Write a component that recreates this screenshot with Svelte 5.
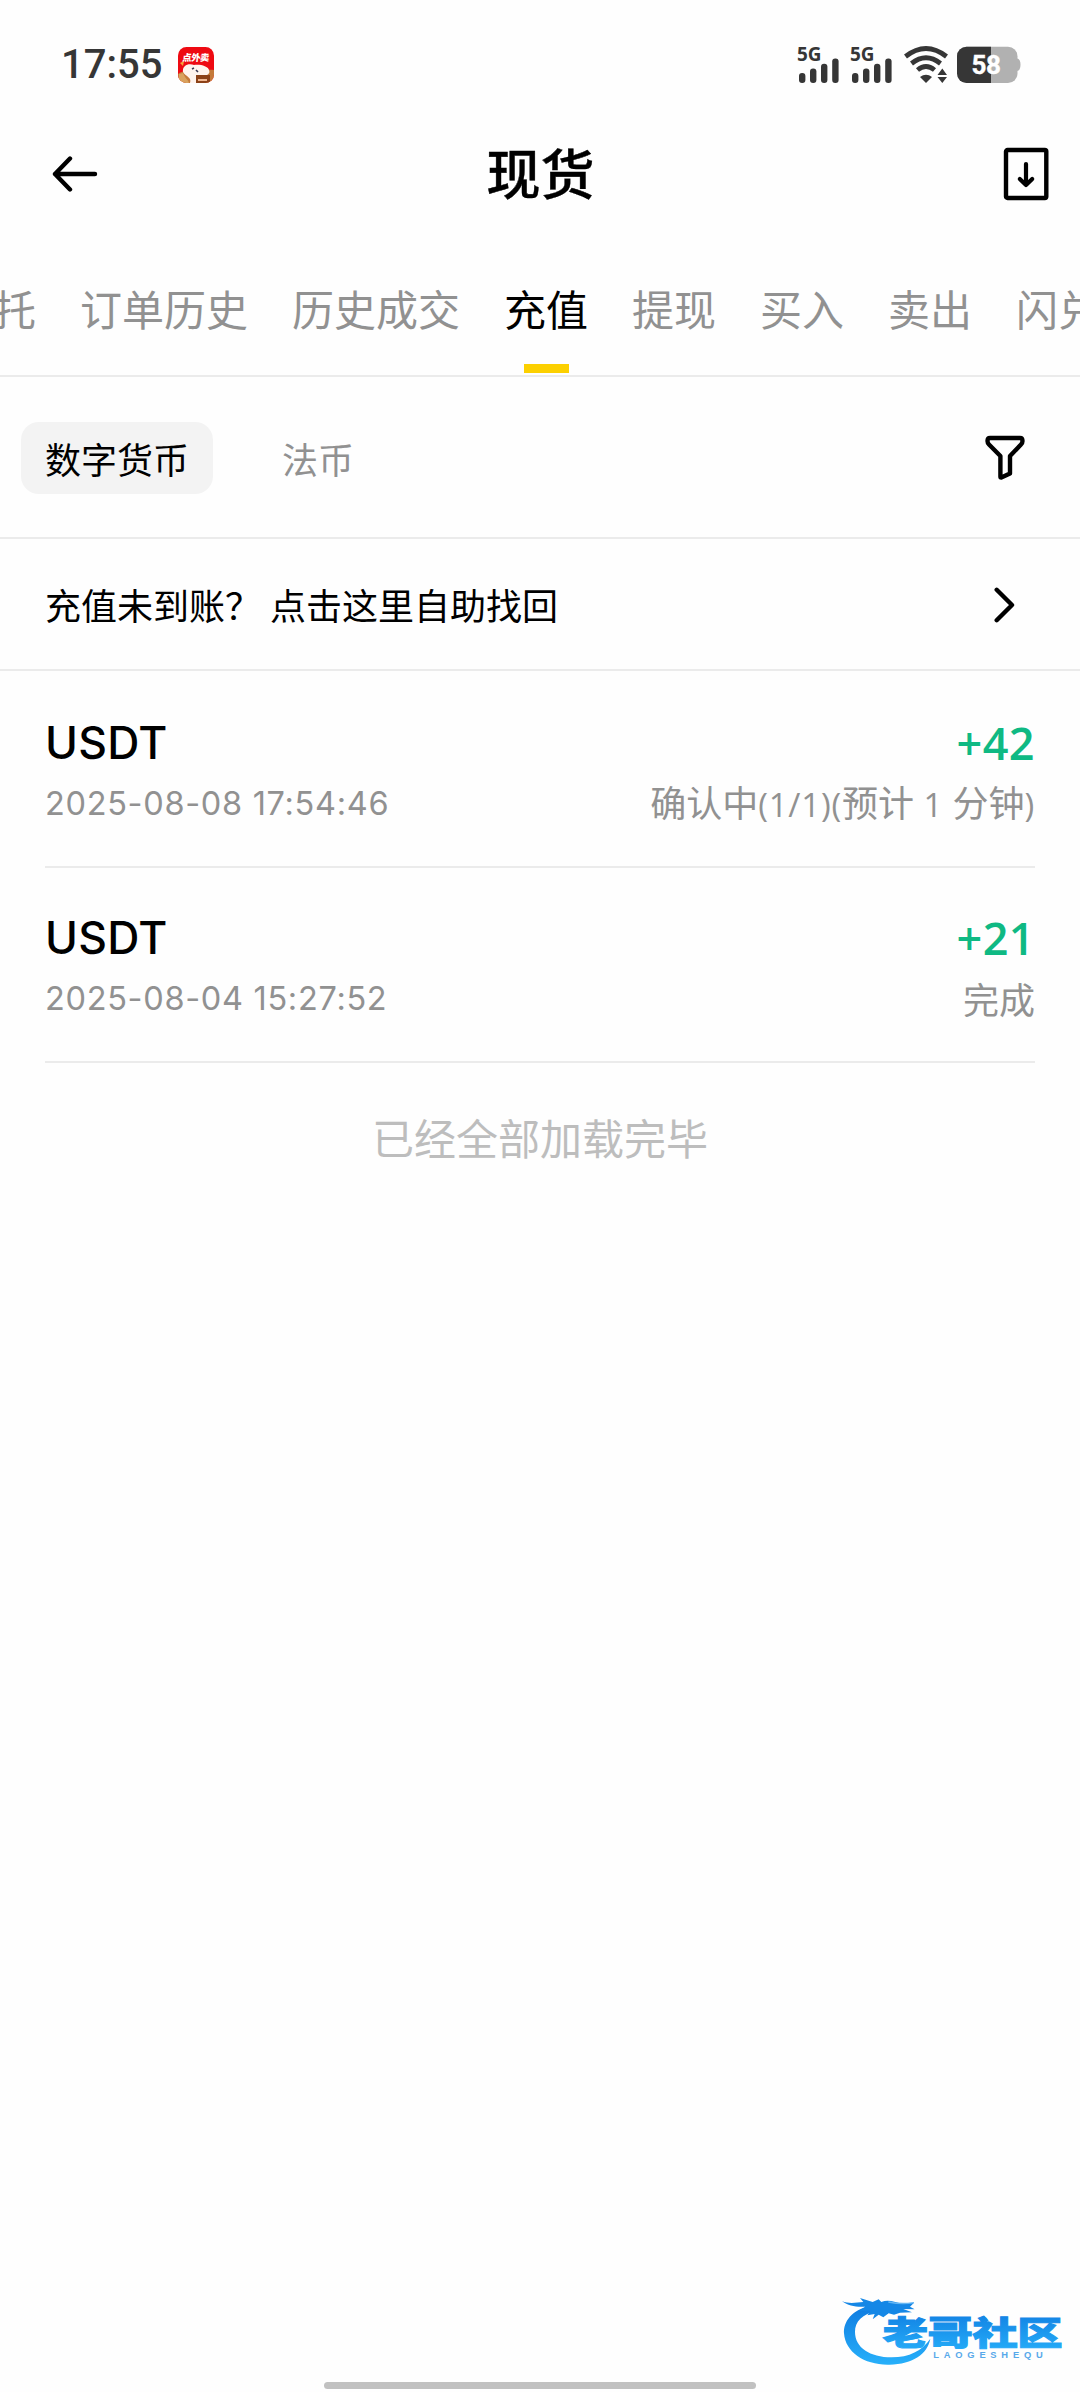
<script>
  const tabs = ['当前委托', '订单历史', '历史成交', '充值', '提现', '买入', '卖出', '闪兑'];
  const active = '充值';
  const records = [
    { coin: 'USDT', time: '2025-08-08 17:54:46', amount: '+42', status: '确认中(1/1)(预计 1 分钟)' },
    { coin: 'USDT', time: '2025-08-04 15:27:52', amount: '+21', status: '完成' }
  ];
  // Latin runs are set slightly smaller than the Chinese characters around them.
  const runs = (text) => text.match(/[\x20-\x7e]+|[^\x20-\x7e]+/g) ?? [];
  const isLatin = (run) => /^[\x20-\x7e]/.test(run);
</script>

{#snippet signal()}
  <svg class="signal" width="42" height="38" viewBox="0 0 42 38">
    <text x="-1" y="15.3" textLength="24.5" lengthAdjust="spacingAndGlyphs">5G</text>
    <rect x="1" y="27" width="6.4" height="10" rx="3" />
    <rect x="12" y="22.4" width="6.4" height="14.6" rx="3" />
    <rect x="23" y="17.8" width="6.4" height="19.2" rx="3" />
    <rect x="34.2" y="12.6" width="6.4" height="24.4" rx="3" />
  </svg>
{/snippet}

<div class="screen">
  <div class="status">
    <span class="clock">17:55</span>
    <svg class="app" width="36" height="36" viewBox="0 0 36 36">
      <defs><clipPath id="tile"><rect width="36" height="36" rx="8.5" /></clipPath></defs>
      <g clip-path="url(#tile)">
        <rect width="36" height="36" fill="#ee0a12" />
        <path d="M0 27C5 22 30 22 36 23V36H0Z" fill="#c47a3a" />
        <path d="M5 25C4 18 11 16 16 18C22 17 30 19 31 23C33 28 27 29 22 29L21 36H12C14 30 8 30 5 25Z" fill="#fff4ee" />
        <path d="M2 16L6 14L5 19Z" fill="#f6a33c" />
        <path d="M5 26C8 33 10 32 11 36H1V27Z" fill="#d9a25e" />
        <rect x="18" y="28" width="14" height="8" fill="#8c4218" />
        <path d="M14 22L16 21M18 23L20 25" stroke="#3b3850" stroke-width="1.6" />
        <path d="M20 33H29" stroke="#f0b791" stroke-width="2" />
        <text x="4.5" y="13.6" font-size="9.3" font-weight="900" fill="#fff" textLength="27" transform="skewX(-6) translate(1 0)">点外卖</text>
      </g>
    </svg>
    <span class="grow"></span>
    {@render signal()}
    {@render signal()}
    <svg class="wifi" width="45" height="38" viewBox="0 0 45 38">
      <g fill="none" stroke="#363636" stroke-width="4.8">
        <path d="M1.5 10.5Q22 -5.5 42.5 10.5" />
        <path d="M7.5 17.5Q22 6 36.5 17.5" />
        <path d="M13.5 24Q22 17 30.5 24" />
      </g>
      <path d="M16 31Q22 26.500 28 31L22 37Z" fill="#363636" />
      <path d="M33.500 29L38.300 22.500L43 29ZM33.500 31L38.300 37L43 31Z" fill="#363636" />
    </svg>
    <svg class="battery" width="64" height="38" viewBox="0 0 64 38">
      <defs><clipPath id="cell"><rect y="0.7" width="60.5" height="36.300" rx="9.500" /></clipPath></defs>
      <path d="M60 12.500Q63.500 13 63.500 18.800T60 25Z" fill="#b1b1b1" />
      <g clip-path="url(#cell)">
        <rect width="61" height="38" fill="#b1b1b1" />
        <rect width="34" height="38" fill="#363636" />
      </g>
      <text x="14.5" y="28" textLength="29.5">58</text>
    </svg>
  </div>

  <header>
    <svg width="46" height="36" viewBox="0 0 46 36">
      <path d="M18 2.500L3 18L18 33.500M3 18H43" fill="none" stroke="#000" stroke-width="4.400" stroke-linecap="round" stroke-linejoin="round" />
    </svg>
    <h1>现货</h1>
    <svg width="46" height="54" viewBox="0 0 46 54">
      <rect x="3" y="3" width="40.300" height="48" rx="1.500" fill="none" stroke="#000" stroke-width="4.400" />
      <path d="M23 17V38M16.800 32L23 38L29.200 32" fill="none" stroke="#000" stroke-width="4.200" stroke-linecap="round" stroke-linejoin="round" />
    </svg>
  </header>

  <nav>
    {#each tabs as tab}
      <span class="tab" class:active={tab === active}>{tab}</span>
    {/each}
  </nav>

  <div class="filters">
    <span class="chip on">数字货币</span>
    <span class="chip">法币</span>
    <span class="grow"></span>
    <svg width="40" height="46" viewBox="0 0 40 46">
      <path d="M5 3H35Q37.500 3 37.500 6Q37.500 8 36 9.500L25 21V38.500L16.300 42.500Q15.400 42.500 15.400 41.500V21L4 9.500Q2.500 8 2.500 6Q2.500 3 5 3Z" fill="none" stroke="#000" stroke-width="4.400" stroke-linejoin="round" />
    </svg>
  </div>

  <div class="help">
    <span class="help-text">充值未到账？<span class="gap">&nbsp;</span>点击这里自助找回</span>
    <svg width="22" height="36" viewBox="0 0 22 36">
      <path d="M2.700 2.800L18 18L2.700 33.200" fill="none" stroke="#000" stroke-width="4.400" stroke-linecap="round" stroke-linejoin="round" />
    </svg>
  </div>

  <main>
    {#each records as record}
      <section class="record">
        <div class="line main-line">
          <span class="coin">{record.coin}</span>
          <span class="amount">{record.amount}</span>
        </div>
        <div class="line sub-line">
          <span class="time">{record.time}</span>
          <span class="state">{#each runs(record.status) as run}<span class:latin={isLatin(run)}>{run}</span>{/each}</span>
        </div>
      </section>
    {/each}
    <p class="end">已经全部加载完毕</p>
  </main>

  <footer>
    <svg class="brand" width="260" height="96" viewBox="0 0 780 288">
      <defs>
        <linearGradient id="blue" x1="0" y1="0" x2="0" y2="1">
          <stop offset="0" stop-color="#0f7be0" />
          <stop offset="1" stop-color="#27b0fa" />
        </linearGradient>
      </defs>
      <path d="M150 78C95 90 70 125 72 160C76 218 135 256 208 254C280 252 322 222 331 176C306 212 268 232 215 232C150 232 105 203 105 156C105 124 126 102 172 92Z" fill="url(#blue)" />
      <path d="M66 64C88 72 108 68 130 66L120 54L158 66L176 58L184 66C205 58 225 66 240 70L282 68L270 80L284 88L250 87L276 97L240 98L222 104L206 100L190 112L176 104L158 118L164 102L142 106L152 92L118 92L136 80C110 82 85 78 66 64Z" fill="#1587e6" />
      <path d="M205 66C235 72 258 72 282 68" fill="none" stroke="#64b6f4" stroke-width="4" />
      <g fill="url(#blue)" stroke="url(#blue)" stroke-width="3">
        <text class="name" transform="translate(188 196) scale(1.360 1)" font-size="100" textLength="397">老哥社区</text>
      </g>
      <text class="latin-name" x="340" y="234" textLength="328">LAOGESHEQU</text>
    </svg>
    <div class="home"></div>
  </footer>
</div>

<style>
  :global(body) { background: #fefefe; }
  .screen {
    width: 1080px;
    height: 2392px;
    display: flex;
    flex-direction: column;
    overflow: hidden;
    color: #000;
    background: #fefefe;
    font-family: 'Noto Sans CJK SC', sans-serif;
    font-size: 36px;
  }
  svg { display: block; flex: none; }
  .grow { flex: 1; }
  .status {
    height: 128px;
    box-sizing: border-box;
    padding: 2px 59px 0 61px;
    display: flex;
    align-items: center;
  }
  .clock {
    font: 500 40px/40px Roboto, sans-serif;
    color: #363636;
  }
  .app { margin-left: 16px; }
  .signal { margin-right: 11px; fill: #363636; overflow: visible; }
  .signal text { font: 700 19px 'Noto Sans', sans-serif; }
  .wifi { margin-right: 8px; }
  .battery text { font: 700 26px Roboto, sans-serif; fill: #fff; stroke: #fff; stroke-width: 0.4px; }
  header {
    height: 92px;
    padding: 0 31px 0 52px;
    display: flex;
    align-items: center;
    justify-content: space-between;
  }
  h1 {
    margin: -5px 0 0 -20px;
    font-size: 54px;
    line-height: 87px;
    font-weight: 500;
    -webkit-text-stroke: 0.4px #000;
  }
  nav {
    height: 155px;
    border-bottom: 2px solid #ebebeb;
    display: flex;
    gap: 44px;
    margin-left: -132px;
    font-size: 42px;
    line-height: 175px;
    color: #919191;
  }
  .tab { flex: none; white-space: nowrap; }
  .active {
    display: flex;
    flex-direction: column;
    align-items: center;
    color: #000;
  }
  .active::after {
    content: '';
    flex: none;
    width: 45px;
    height: 9px;
    margin-top: -31px;
    background: #fcd000;
  }
  .filters {
    height: 158px;
    padding: 2px 55px 0 21px;
    border-bottom: 2px solid #ebebeb;
    display: flex;
    align-items: center;
    gap: 45px;
  }
  .chip { padding: 0 24px; height: 72px; line-height: 73px; border-radius: 18px; color: #919191; }
  .chip.on { background: #f3f3f3; color: #000; }
  .help {
    height: 129px;
    padding: 1px 64px 0 45px;
    border-bottom: 2px solid #ebebeb;
    display: flex;
    align-items: center;
    justify-content: space-between;
  }
  .help-text { margin-bottom: 2px; }
  .gap { letter-spacing: 1px; }
  main { padding: 2px 45px 0; flex: 1; }
  .record {
    height: 195px;
    box-sizing: border-box;
    padding-top: 39px;
    border-bottom: 2px solid #ebebeb;
  }
  .line { display: flex; justify-content: space-between; align-items: center; }
  .main-line { height: 60px; font: 600 45px/59px 'Open Sans', sans-serif; }
  .coin { margin-top: 3px; font-family: Inter, sans-serif; font-size: 44.5px; font-weight: 500; letter-spacing: 0.3px; }
  .amount { color: #0fb983; letter-spacing: 0.4px; }
  .sub-line { height: 62px; color: #919191; line-height: 62px; }
  .time {
    margin-top: 2px;
    font: 32.5px/62px Inter, sans-serif;
    letter-spacing: 0.68px;
  }
  .state { white-space: pre; }
  .latin { font-family: 'Open Sans', sans-serif; font-size: 33px; letter-spacing: 0.8px; }
  .end { margin: 43px 0 0; text-align: center; font-size: 42px; line-height: 62px; color: #bdbdbd; }
  footer { display: flex; flex-direction: column; align-items: center; }
  .brand { align-self: flex-end; }
  .name { font-weight: 900; }
  .latin-name { font: 700 28px 'Liberation Sans', sans-serif; fill: #58a9ea; }
  .home { width: 432px; height: 7px; margin: 6px 0 3px; border-radius: 4px; background: #c1c1c1; }
</style>
